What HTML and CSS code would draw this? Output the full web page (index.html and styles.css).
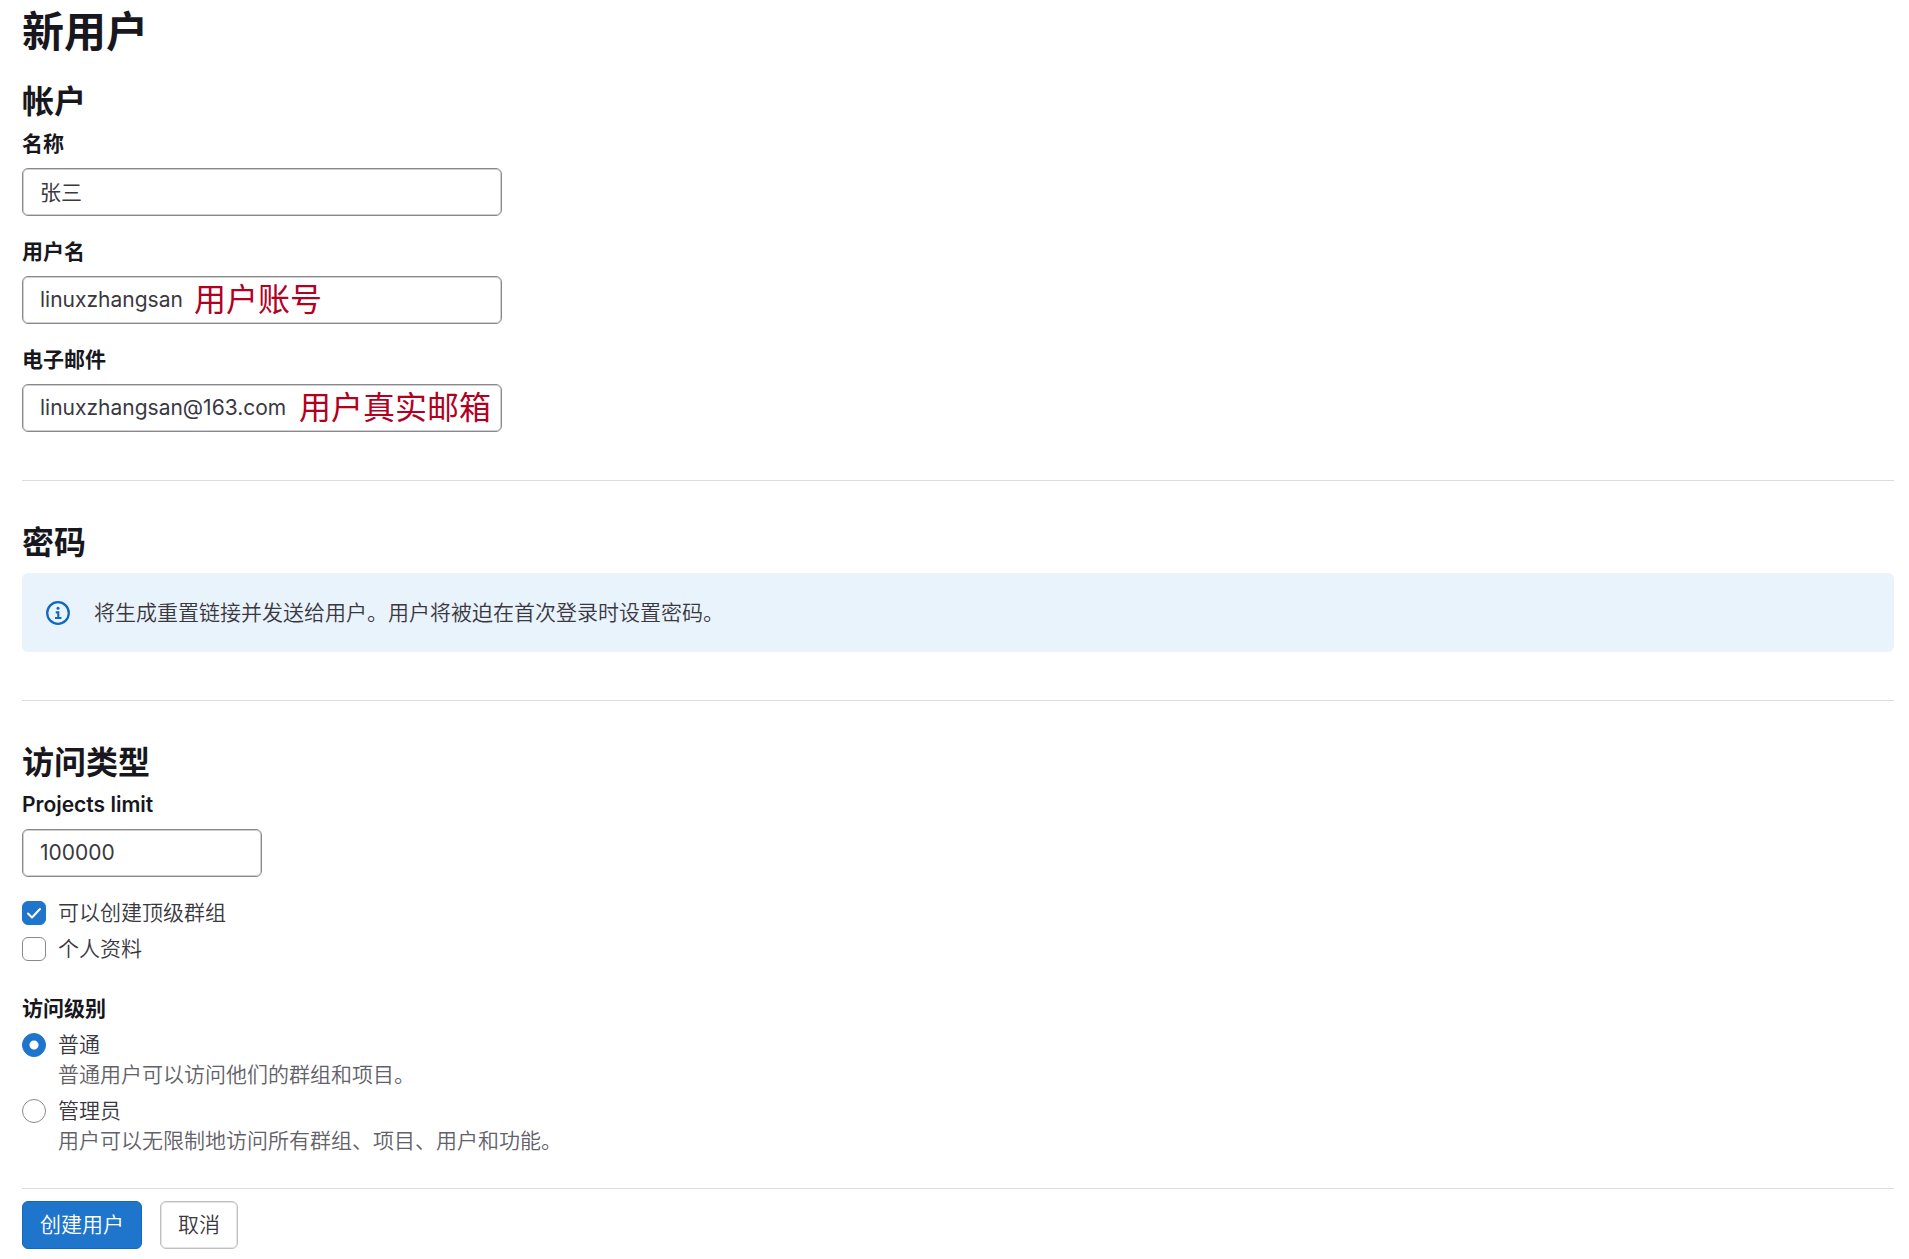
FILE: index.html
```html
<!DOCTYPE html>
<html lang="zh-CN">
<head>
    <meta charset="UTF-8">
    <meta name="viewport" content="width=device-width, initial-scale=1.0">
    <title>新用户</title>
    <link rel="stylesheet" href="styles.css">
</head>
<body>
    <main class="page">
        <h1 class="page-title">新用户</h1>

        <form class="user-form">
            <section class="section">
                <h2 class="section-title">帐户</h2>
                <div class="form-group">
                    <label class="form-label" for="userName">名称</label>
                    <input class="form-input" id="userName" type="text" value="张三">
                </div>
                <div class="form-group">
                    <label class="form-label" for="userLogin">用户名</label>
                    <div class="noted-input">
                        <input class="form-input" id="userLogin" type="text" value="linuxzhangsan">
                        <span class="note note-login">用户账号</span>
                    </div>
                </div>
                <div class="form-group">
                    <label class="form-label" for="userEmail">电子邮件</label>
                    <div class="noted-input">
                        <input class="form-input" id="userEmail" type="text" value="linuxzhangsan@163.com">
                        <span class="note note-email">用户真实邮箱</span>
                    </div>
                </div>
            </section>

            <section class="section">
                <h2 class="section-title">密码</h2>
                <div class="alert">
                    <svg class="alert-icon" viewBox="0 0 16 16" aria-hidden="true">
                        <circle cx="8" cy="8" r="7.2" fill="none" stroke="currentColor" stroke-width="1.5"/>
                        <circle cx="8" cy="4.9" r="1" fill="currentColor"/>
                        <path d="M6.5 7.6H8.2V11.2M6 11.3H10.3" fill="none" stroke="currentColor" stroke-width="1.4"/>
                    </svg>
                    <p class="alert-text">将生成重置链接并发送给用户。用户将被迫在首次登录时设置密码。</p>
                </div>
            </section>

            <section class="section">
                <h2 class="section-title">访问类型</h2>
                <div class="form-group">
                    <label class="form-label" for="projectsLimit">Projects limit</label>
                    <input class="form-input form-input-small" id="projectsLimit" type="text" value="100000">
                </div>
                <div class="choices">
                    <div class="choice">
                        <input class="choice-input checkbox" id="canCreateGroup" type="checkbox" checked>
                        <label for="canCreateGroup">可以创建顶级群组</label>
                    </div>
                    <div class="choice">
                        <input class="choice-input checkbox" id="privateProfile" type="checkbox">
                        <label for="privateProfile">个人资料</label>
                    </div>
                </div>
                <fieldset class="access-level">
                    <legend class="form-label">访问级别</legend>
                    <div class="choices">
                        <div class="choice">
                            <input class="choice-input radio" id="levelRegular" type="radio" name="access_level" checked>
                            <label for="levelRegular">普通<span class="help-text">普通用户可以访问他们的群组和项目。</span></label>
                        </div>
                        <div class="choice">
                            <input class="choice-input radio" id="levelAdmin" type="radio" name="access_level">
                            <label for="levelAdmin">管理员<span class="help-text">用户可以无限制地访问所有群组、项目、用户和功能。</span></label>
                        </div>
                    </div>
                </fieldset>
            </section>

            <div class="actions">
                <button class="button button-confirm" type="submit">创建用户</button>
                <button class="button" type="button">取消</button>
            </div>
        </form>
    </main>
</body>
</html>
```

FILE: styles.css
```css
* {
    box-sizing: border-box;
    margin: 0;
    padding: 0;
}

body {
    background-color: #fff;
    color: #3a383f;
    font-family: Inter, "Noto Sans CJK SC", sans-serif;
    font-size: 21px;
    font-weight: 350;
    line-height: 30px;
}

.page {
    padding: 4px 15px 10px 22px;
}

.page-title,
.section-title,
.form-label {
    color: #18171d;
    font-weight: 600;
}

.page-title {
    margin-bottom: 22px;
    font-size: 42px;
    line-height: 56px;
}

.section {
    padding-bottom: 48px;
    border-bottom: 1px solid #dcdcde;
}

.section + .section {
    padding-top: 42px;
}

.section:last-of-type {
    padding-bottom: 32px;
}

.section-title {
    margin-bottom: 6px;
    font-size: 32px;
    line-height: 40px;
}

.form-group + .form-group {
    margin-top: 20px;
}

.form-label {
    display: block;
    margin-bottom: 8px;
    line-height: 32px;
}

.form-input {
    display: block;
    width: 100%;
    max-width: 480px;
    height: 48px;
    padding: 0 17px 2px;
    border: 1px solid #89888d;
    border-radius: 6px;
    background-color: #fff;
    box-shadow: inset 0 0 0 1px #d0d0d3;
    color: #3a383f;
    font: inherit;
    font-weight: 400;
}

.form-input-small {
    max-width: 240px;
}

.noted-input {
    position: relative;
}

/* red remarks lie over the text boxes */
.note {
    position: absolute;
    top: 0;
    color: #b3001e;
    font-size: 32px;
    font-weight: 400;
    line-height: 48px;
    pointer-events: none;
}

.note-login {
    left: 172px;
}

.note-email {
    left: 277px;
}

.alert {
    display: flex;
    align-items: center;
    gap: 24px;
    margin-top: 10px;
    padding: 24px;
    border-radius: 6px;
    background-color: #e9f3fc;
    line-height: 31px;
}

.alert-icon {
    flex: none;
    width: 24px;
    height: 24px;
    color: #1068bf;
}

.choices {
    display: grid;
    gap: 6px;
}

.form-group + .choices {
    margin-top: 21px;
}

.choice {
    display: flex;
    align-items: flex-start;
    gap: 12px;
}

.choice-input {
    flex: none;
    width: 24px;
    height: 24px;
    margin-top: 3px;
    appearance: none;
    border: 1px solid #89888d;
    background-color: #fff;
}

.checkbox {
    border-radius: 6px;
}

.radio {
    border-radius: 50%;
}

.choice-input:checked {
    border-color: #1f75cb;
    background-color: #1f75cb;
}

.checkbox:checked {
    background-image: url("data:image/svg+xml,%3Csvg xmlns='http://www.w3.org/2000/svg' viewBox='0 0 22 22'%3E%3Cpath d='M5 11.5l4 4 8-8.5' fill='none' stroke='%23fff' stroke-width='2' stroke-linecap='round' stroke-linejoin='round'/%3E%3C/svg%3E");
}

.radio:checked {
    background-image: radial-gradient(circle, #fff 4px, transparent 5px);
}

.access-level {
    margin-top: 29px;
    border: none;
}

.access-level .form-label {
    margin-bottom: 5px;
}

.help-text {
    display: block;
    color: #626168;
}

.actions {
    display: flex;
    gap: 18px;
    padding-top: 12px;
}

.button {
    height: 48px;
    padding: 0 17px;
    border: 1px solid #bfbfc3;
    border-radius: 6px;
    background-color: #fff;
    box-shadow: inset 0 0 0 1px #e4e4e6;
    color: #3a383f;
    font: inherit;
    cursor: pointer;
}

.button-confirm {
    border-color: #1068bf;
    background-color: #1f75cb;
    box-shadow: none;
    color: #fff;
}
```
